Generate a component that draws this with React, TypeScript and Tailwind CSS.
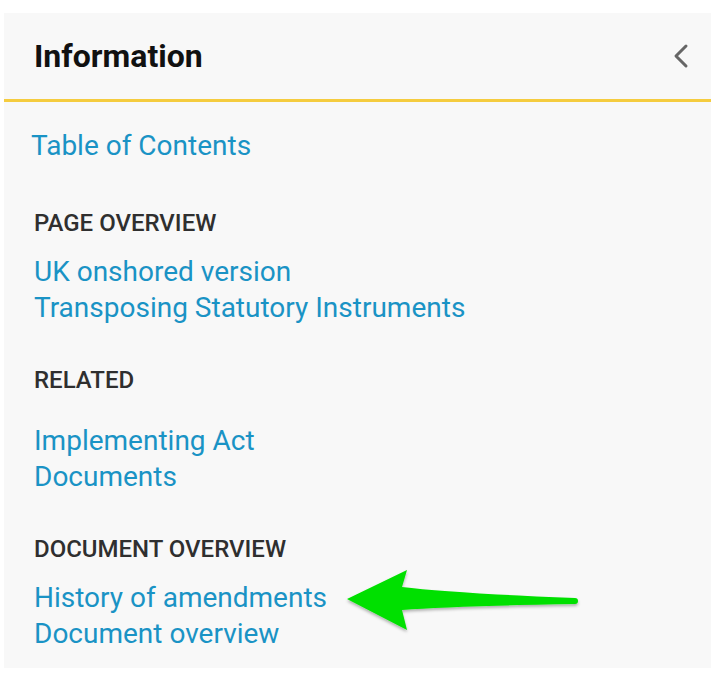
import { ReactNode } from "react"

const font = { fontFamily: "Roboto, 'Liberation Sans', sans-serif" }

function Heading({ children, className = "" }: { children: ReactNode; className?: string }) {
  return <div className={`text-[24px] leading-[30px] font-medium text-[#2f2f2f] ${className}`}>{children}</div>
}

function Link({ children }: { children: ReactNode }) {
  return <a className="block text-[28px] leading-[36px] text-[#1a93c5]">{children}</a>
}

export default function App() {
  return (
    <div className="relative min-h-[678px] bg-white px-[4px] pt-[13px]" style={font}>
      <aside className="w-[707px] bg-[#f8f8f8]">
        {/* Header */}
        <div className="flex h-[89px] items-center justify-between border-b-[3px] border-[#f5cc3f] pl-[30px] pr-[22px]">
          <h2 className="text-[32px] font-bold text-[#111]">Information</h2>
          <svg width="16" height="26" viewBox="0 0 16 26" fill="none">
            <polyline points="13,3 3,13 13,23" stroke="#666" strokeWidth="3" strokeLinecap="round" strokeLinejoin="round" />
          </svg>
        </div>

        {/* Body */}
        <div className="px-[30px] pb-[16px] pt-[26px]">
          <div className="-ml-[3px]">
            <Link>Table of Contents</Link>
          </div>

          <Heading className="mt-[44px]">PAGE OVERVIEW</Heading>
          <div className="mt-[16px]">
            <Link>UK onshored version</Link>
            <Link>Transposing Statutory Instruments</Link>
          </div>

          <Heading className="mt-[39px]">RELATED</Heading>
          <div className="mt-[28px]">
            <Link>Implementing Act</Link>
            <Link>Documents</Link>
          </div>

          <Heading className="mt-[39px]">DOCUMENT OVERVIEW</Heading>
          <div className="mt-[16px]">
            <Link>History of amendments</Link>
            <Link>Document overview</Link>
          </div>
        </div>
      </aside>

      {/* Annotation arrow */}
      <svg className="absolute left-[340px] top-[560px]" width="250" height="80" viewBox="0 0 250 80">
        <defs>
          <filter id="sh" x="-10%" y="-20%" width="120%" height="150%">
            <feDropShadow dx="0" dy="2" stdDeviation="1.5" floodColor="#000" floodOpacity="0.3" />
          </filter>
        </defs>
        <path
          d="M7 39 L67 10 L62 27 Q110 33 235 38 A3 3 0 0 1 235 44 Q110 46 62 50 L67 70 Z"
          fill="#00e000"
          filter="url(#sh)"
        />
      </svg>
    </div>
  )
}
